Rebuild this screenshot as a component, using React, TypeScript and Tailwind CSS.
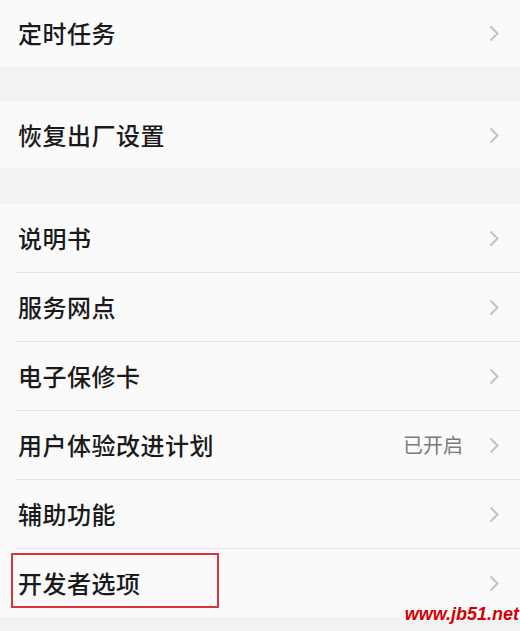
import React from "react";

type Item = { label: string; value?: string; highlight?: boolean };

const groups: Item[][] = [
  [{ label: "定时任务" }],
  [{ label: "恢复出厂设置" }],
  [
    { label: "说明书" },
    { label: "服务网点" },
    { label: "电子保修卡" },
    { label: "用户体验改进计划", value: "已开启" },
    { label: "辅助功能" },
    { label: "开发者选项", highlight: true },
  ],
];

const Chevron = () => (
  <svg width="10" height="17" viewBox="0 0 10 17" className="shrink-0">
    <path d="M1.5 1.5 L8.5 8.5 L1.5 15.5" fill="none" stroke="#c2c2c2" strokeWidth="2" />
  </svg>
);

const Row = ({ item, height, divider }: { item: Item; height: string; divider: boolean }) => (
  <div className="relative bg-[#fafafa]">
    <div className={`flex items-center pl-[18px] pr-[21px] ${height}`}>
      <span className="relative text-[24px] font-medium text-[#1a1a1a] tracking-[0.5px]">
        {item.label}
        {item.highlight && (
          <span className="absolute -left-[7px] -top-[12px] w-[208px] h-[55px] border-2 border-[#d8343a]" />
        )}
      </span>
      <div className="ml-auto flex items-center gap-[26px]">
        {item.value && <span className="text-[20px] text-[#7a7a7a]">{item.value}</span>}
        <Chevron />
      </div>
    </div>
    {divider && <div className="ml-[16px] h-px bg-[#e6e6e6]" />}
  </div>
);

export default function App() {
  return (
    <div
      className="relative w-[520px] h-[631px] overflow-hidden bg-[#f2f2f2]"
      style={{ fontFamily: '"Noto Sans CJK SC", "Noto Sans", sans-serif' }}
    >
      <div className="flex flex-col gap-[36px]">
        <Row item={groups[0][0]} height="h-[66px]" divider={false} />
        <Row item={groups[1][0]} height="h-[66px]" divider={false} />
        <div className="flex flex-col">
          {groups[2].map((it, i) => (
            <Row
              key={it.label}
              item={it}
              height="h-[68px]"
              divider={i < groups[2].length - 1}
            />
          ))}
        </div>
      </div>
      <span className="absolute right-[1px] top-[601px] text-[18px] font-bold italic text-[#d10000] font-['Liberation_Sans',sans-serif]">
        www.jb51.net
      </span>
    </div>
  );
}
